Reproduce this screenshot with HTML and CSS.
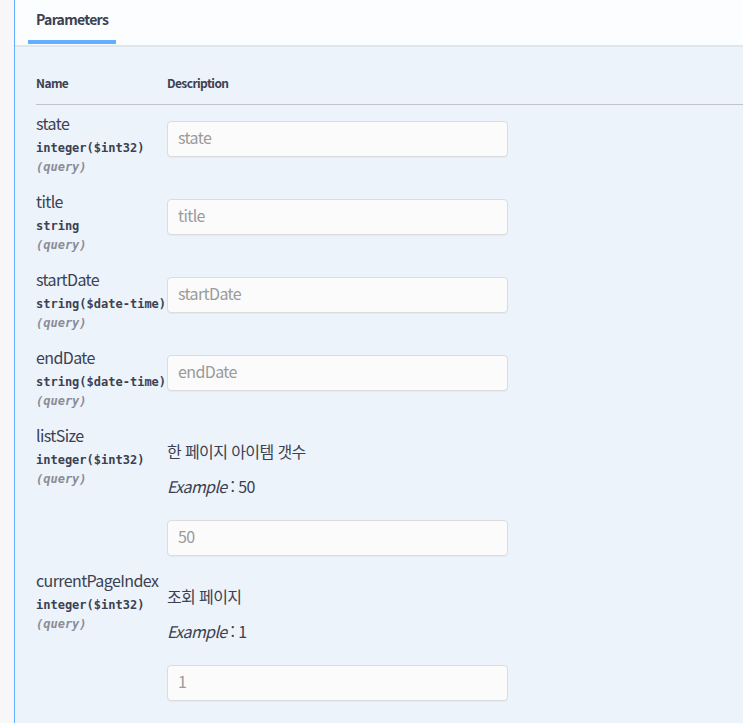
FILE: index.html
```html
<!DOCTYPE html>
<html lang="ko">
<head>
    <meta charset="UTF-8">
    <meta name="viewport" content="width=device-width, initial-scale=1.0">
    <title>Parameters</title>
    <link rel="stylesheet" href="styles.css">
</head>
<body>

    <div class="opblock">
        <div class="section-header">
            <div class="tab-item">Parameters</div>
        </div>

        <div class="params-body">
            <table class="parameters">
                <thead>
                    <tr>
                        <th class="col-name">Name</th>
                        <th class="col-desc">Description</th>
                    </tr>
                </thead>
                <tbody>
                    <tr>
                        <td class="col-name">
                            <div class="param-name">state</div>
                            <div class="param-type">integer<span class="param-format">($int32)</span></div>
                            <div class="param-in">(query)</div>
                        </td>
                        <td class="col-desc">
                            <input type="text" class="param-input" placeholder="state">
                        </td>
                    </tr>
                    <tr>
                        <td class="col-name">
                            <div class="param-name">title</div>
                            <div class="param-type">string</div>
                            <div class="param-in">(query)</div>
                        </td>
                        <td class="col-desc">
                            <input type="text" class="param-input" placeholder="title">
                        </td>
                    </tr>
                    <tr>
                        <td class="col-name">
                            <div class="param-name">startDate</div>
                            <div class="param-type">string<span class="param-format">($date-time)</span></div>
                            <div class="param-in">(query)</div>
                        </td>
                        <td class="col-desc">
                            <input type="text" class="param-input" placeholder="startDate">
                        </td>
                    </tr>
                    <tr>
                        <td class="col-name">
                            <div class="param-name">endDate</div>
                            <div class="param-type">string<span class="param-format">($date-time)</span></div>
                            <div class="param-in">(query)</div>
                        </td>
                        <td class="col-desc">
                            <input type="text" class="param-input" placeholder="endDate">
                        </td>
                    </tr>
                    <tr>
                        <td class="col-name">
                            <div class="param-name">listSize</div>
                            <div class="param-type">integer<span class="param-format">($int32)</span></div>
                            <div class="param-in">(query)</div>
                        </td>
                        <td class="col-desc">
                            <p class="param-desc">한 페이지 아이템 갯수</p>
                            <p class="param-example"><i>Example</i> : 50</p>
                            <input type="text" class="param-input" placeholder="50">
                        </td>
                    </tr>
                    <tr>
                        <td class="col-name">
                            <div class="param-name">currentPageIndex</div>
                            <div class="param-type">integer<span class="param-format">($int32)</span></div>
                            <div class="param-in">(query)</div>
                        </td>
                        <td class="col-desc">
                            <p class="param-desc">조회 페이지</p>
                            <p class="param-example"><i>Example</i> : 1</p>
                            <input type="text" class="param-input" placeholder="1">
                        </td>
                    </tr>
                </tbody>
            </table>
        </div>
    </div>

</body>
</html>
```

FILE: styles.css
```css
html, body {
    height: 100%;
}

body {
    margin: 0;
    background-color: #f7f7f7;
    font-family: "Noto Sans CJK KR", "Noto Sans", sans-serif;
    color: #3b4151;
    overflow: hidden;
}

.opblock {
    margin-left: 14px;
    min-height: 100%;
    border-left: 1px solid #61affe;
    background-color: #edf3fb;
}

.section-header {
    display: flex;
    padding: 10px 0 1px 13px;
    background-color: #fcfdfe;
    border-bottom: 2px solid #e0e6ed;
}

.tab-item {
    padding: 0 8px 12px;
    font-size: 14px;
    font-weight: bold;
    line-height: 18px;
    letter-spacing: -0.7px;
    border-bottom: 4px solid #61affe;
}

.params-body {
    padding-left: 21px;
}

.parameters {
    width: 100%;
    border-collapse: collapse;
}

.parameters th {
    padding: 28px 0 13px;
    font-size: 12px;
    font-weight: bold;
    line-height: 16px;
    letter-spacing: -0.6px;
    text-align: left;
    border-bottom: 1px solid #bfc3cb;
}

.parameters td {
    vertical-align: top;
    padding: 0;
}

.col-name {
    width: 131px;
}

td.col-name {
    padding: 8px 0 9px !important;
}

.param-name {
    font-size: 16px;
    line-height: 20px;
    letter-spacing: -0.6px;
}

.param-type {
    margin-top: 8px;
    font-family: "DejaVu Sans Mono", "Liberation Mono", monospace;
    font-size: 12px;
    font-weight: bold;
    line-height: 14px;
    white-space: nowrap;
}

.param-in {
    margin-top: 5px;
    font-family: "DejaVu Sans Mono", "Liberation Mono", monospace;
    font-size: 12px;
    font-style: italic;
    font-weight: bold;
    line-height: 14px;
    color: #8a8d96;
}

.param-desc,
.param-example {
    margin: 0;
    font-size: 16px;
    line-height: 20px;
    letter-spacing: -0.6px;
}

.param-desc {
    margin-top: 24px;
}

.param-example {
    margin-top: 15px;
}

.param-example + .param-input {
    margin-top: 24px;
}

.param-input {
    display: block;
    box-sizing: border-box;
    width: 341px;
    height: 36px;
    margin: 16px 0 6px;
    padding: 0 10px 5px;
    font-family: "Noto Sans CJK KR", "Noto Sans", sans-serif;
    font-size: 16px;
    letter-spacing: -0.6px;
    color: #3b4151;
    background-color: #fbfbfb;
    border: 1px solid #dcdcdc;
    border-radius: 4px;
    box-shadow: 0 1px 1px rgba(0, 0, 0, 0.04);
    outline: none;
}

.param-input::placeholder {
    color: #9a9a9a;
}
```
